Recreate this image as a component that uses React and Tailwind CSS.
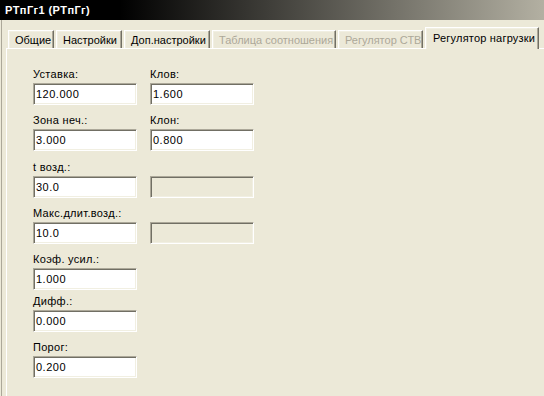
const font = { fontFamily: '"Liberation Sans", Arial, sans-serif' };

const tabs = [
  { label: 'Общие', w: 'w-[46px]' },
  { label: 'Настройки', w: 'w-[66px]' },
  { label: 'Доп.настройки', w: 'w-[86px]' },
  { label: 'Таблица соотношения', w: 'w-[124px]', disabled: true },
  { label: 'Регулятор СТВ', w: 'w-[85px]', disabled: true },
  { label: 'Регулятор нагрузки', w: 'w-[114px]', active: true },
];

const rows = [
  { mt: 'mt-[19px]', a: { label: 'Уставка:', value: '120.000' }, b: { label: 'Клов:', value: '1.600' } },
  { mt: 'mt-[9px]', a: { label: 'Зона неч.:', value: '3.000' }, b: { label: 'Клон:', value: '0.800' } },
  { mt: 'mt-[10px]', a: { label: 't возд.:', value: '30.0' }, b: { label: '', value: '', disabled: true } },
  { mt: 'mt-[9px]', a: { label: 'Макс.длит.возд.:', value: '10.0' }, b: { label: '', value: '', disabled: true } },
  { mt: 'mt-[9px]', a: { label: 'Коэф. усил.:', value: '1.000' } },
  { mt: 'mt-[5px]', a: { label: 'Дифф.:', value: '0.000' } },
  { mt: 'mt-[9px]', a: { label: 'Порог:', value: '0.200' } },
];

function Tab({ tab }) {
  if (tab.active) {
    return (
      <div
        className={`${tab.w} relative z-10 -mb-px h-[22px] border-t border-l border-white border-r border-r-[#716f64] bg-[#ece9d8] pl-[7px] pt-[4px] text-[11px] leading-[13px] tracking-[0.2px] whitespace-nowrap text-black shadow-[inset_-1px_0_0_#aca899,inset_1px_1px_0_#f1efe2]`}
      >
        {tab.label}
      </div>
    );
  }
  return (
    <div
      className={`${tab.w} h-[18px] border-t border-l border-white border-r border-r-[#716f64] pl-[6px] pt-[3px] text-[11px] leading-[13px] whitespace-nowrap shadow-[inset_-1px_0_0_#aca899,inset_1px_1px_0_#f1efe2] ${
        tab.disabled ? 'text-[#aca899]' : 'text-black'
      }`}
    >
      {tab.label}
    </div>
  );
}

function Field({ field }) {
  return (
    <div className="flex w-[104px] flex-col">
      <div className="h-[13px] text-[11px] leading-[13px] tracking-[0.3px] whitespace-nowrap text-black">{field.label}</div>
      <div
        className={`mt-[2px] flex h-[22px] items-center border-t border-l border-[#aca899] border-b border-r border-b-white border-r-white pl-[2px] text-[11px] leading-[13px] tracking-[0.5px] text-black shadow-[inset_1px_1px_0_#716f64,inset_-1px_-1px_0_#f1efe2] ${
          field.disabled ? 'bg-[#ece9d8]' : 'bg-white'
        }`}
      >
        {field.value}
      </div>
    </div>
  );
}

export default function App() {
  return (
    <div className="flex h-[396px] w-[544px] flex-col overflow-hidden bg-[#ece9d8]" style={font}>
      <div className="flex h-[20px] shrink-0 items-center bg-[linear-gradient(to_right,#000_0%,#000_22%,#b3b0a2_100%)] pl-[5px] pt-[1px]">
        <span className="text-[11px] font-bold leading-[13px] tracking-[0.4px] text-white">PTпГг1 (PTпГг)</span>
      </div>
      <div className="ml-px flex flex-1 flex-col border-l border-[#aca899]">
        <div className="flex h-[28px] shrink-0 items-end gap-[2px] pl-[6px]">
          {tabs.map((t) => (
            <Tab key={t.label} tab={t} />
          ))}
        </div>
        <div className="ml-[4px] flex-1 border-t border-l border-white pl-[26px]">
          {rows.map((r, i) => (
            <div key={i} className={`${r.mt} flex gap-[13px]`}>
              <Field field={r.a} />
              {r.b && <Field field={r.b} />}
            </div>
          ))}
        </div>
      </div>
    </div>
  );
}
